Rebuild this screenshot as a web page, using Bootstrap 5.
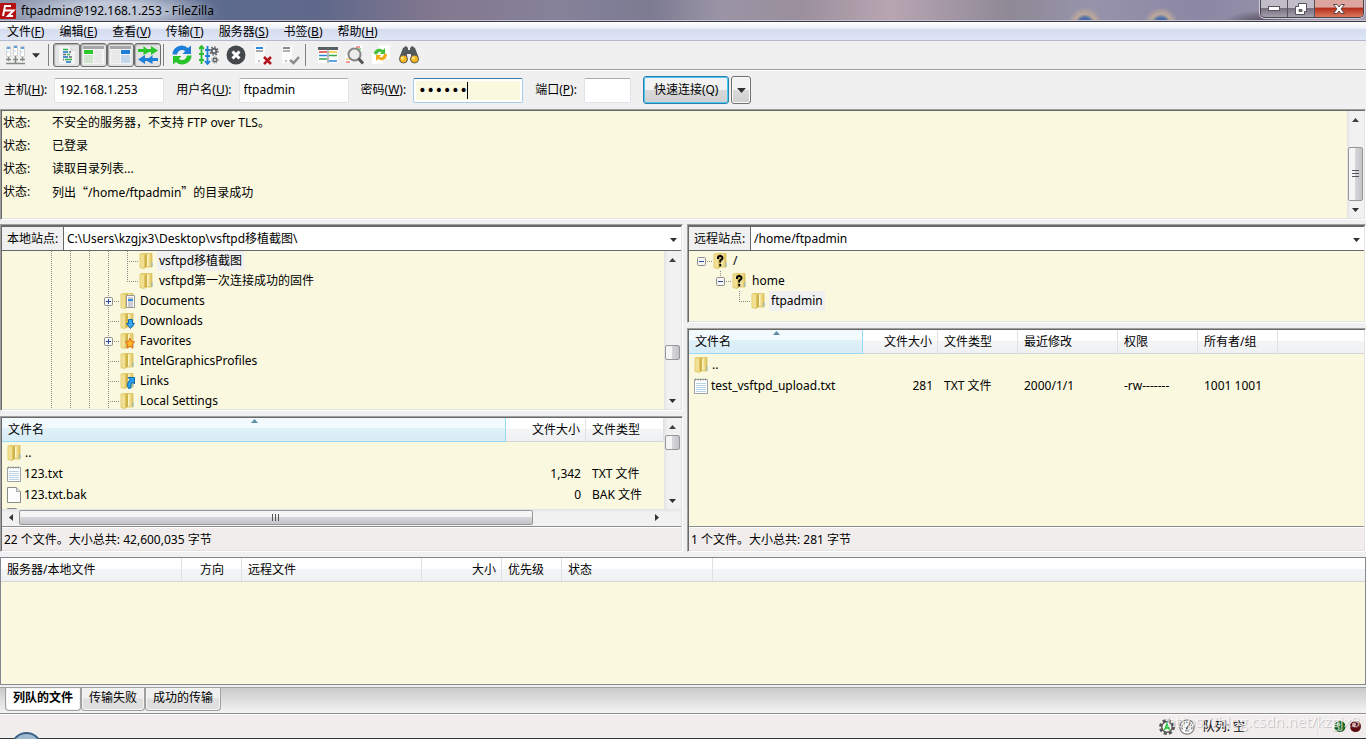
<!DOCTYPE html>
<html lang="zh-CN">
<head>
<meta charset="utf-8">
<meta name="viewport" content="width=device-width, initial-scale=1">
<title>ftpadmin@192.168.1.253 - FileZilla</title>
<link href="https://cdn.jsdelivr.net/npm/bootstrap@5.3.0/dist/css/bootstrap.min.css" rel="stylesheet">
<style>
  :root { --face:#f0f0f0; --cream:#faf8de; --dark:#696969; }
  body { height:100vh; min-height:600px; margin:0; background:var(--face); color:#000; font-family:"Noto Sans","Noto Sans CJK SC",sans-serif; font-size:12px; line-height:18px; }
  button, input, select { font:inherit; color:#000; }
  svg { display:block; flex:none; }
  .cjk { font-family:"Noto Sans CJK SC",sans-serif; }

  .titlebar { height:22px; border-bottom:1px solid #3b3a48; box-shadow:inset 0 -1px #c9c3d0;
    background:
      radial-gradient(ellipse 110px 22px at 110px 11px, rgba(205,212,226,.85) 40%, transparent 100%),
      radial-gradient(circle at 1085px 24px, #4a6ca8 6px, #bda99a 10px, transparent 17px),
      radial-gradient(circle at 1161px 24px, #4a6ca8 6px, #bda99a 10px, transparent 17px),
      radial-gradient(ellipse 40px 14px at 1262px 24px, #4b4350, transparent),
      linear-gradient(90deg,#8c94ab 0,#5c6a8e 230px,#5f688a 320px,#83788f 440px,#85829a 560px,#7c7b92 650px,#9a94a6 720px,#9a8f9b 800px,#b8a5b2 890px,#8e8995 1010px,#9793ab 1090px,#8b87a4 1200px,#a49db0 100%); }
  .titletext { padding-left:5px; }
  .winbtns { height:18px; border:1px solid #474553; border-top:0; border-radius:0 0 5px 5px; box-shadow:0 0 0 1px #cfcad6; margin-right:2px; overflow:hidden; align-self:flex-start; }
  .winbtns button { border:0; padding:0; width:27px; height:17px; border-right:1px solid #55525f; background:linear-gradient(#c0bdc8 0 45%,#75717e 50%,#a39fac); display:flex; align-items:center; justify-content:center; }
  .winbtns .closer { width:48px; border-right:0; background:linear-gradient(#dca59e 0 40%,#b5301d 50%,#da7a5c); }

  .menubar { height:19px; background:linear-gradient(#fff,#eef1f9 35%,#d5dcef 40%,#dfe6f7); border-bottom:1px solid #b4bacb; }
  .menubar button { border:0; background:none; padding:0 8px 0 7px; line-height:20px; }
  .toolbar { height:30px; border-bottom:1px solid #fff; box-shadow:inset 0 -1px #a0a0a0; padding-left:6px; padding-bottom:1px; }
  .toolbar button { border:0; background:none; padding:0; width:27px; height:24px; display:flex; align-items:center; justify-content:center; }
  .toolbar .sites { width:20px; }
  .toolbar .pressed { border:1px solid #6d6d6d; border-radius:3px; background:#e4e4e4; box-shadow:inset 1px 1px 1px #aaa; }
  .sep { width:1px; height:22px; background:#808080; margin:0 4px 0 2px; }
  .quick { height:38px; padding-left:4px; gap:12px; }
  .quick .item { gap:7px; }
  .quick input { width:110px; height:25px; border:1px solid #e2e3ea; border-top-color:#abadb3; padding:0 4px 2px; border-radius:2px; background:#fff; line-height:20px; outline:0; }
  .quick .port { width:47px; }
  .quick .pass { border-color:#a9cbe8; border-top-color:#3d7bad; padding:0 4px; background:var(--cream); box-shadow:inset 0 0 0 2px #fff; font-family:"DejaVu Sans",sans-serif; font-size:14px; }
  .caret { left:54px; top:4px; width:1px; height:17px; background:#000; }
  .connect { height:28px; padding:0 10px; border:1px solid #2e7fae; border-radius:3px; background:linear-gradient(#f2f2f2 0 48%,#dadada 50%,#cfcfcf); box-shadow:inset 0 0 0 1px #48c9f2; margin-right:2px; }
  .drop { width:20px; height:28px; border:1px solid #707070; border-radius:3px; background:linear-gradient(#f2f2f2 0 48%,#dadada 50%,#cfcfcf); box-shadow:inset 0 0 0 1px #fbfbfb; padding:0; }

  .pane { border:1px solid; border-color:#a0a0a0 #fff #fff #a0a0a0; padding:1px; box-shadow:inset 1px 1px var(--dark), inset -1px -1px #e3e3e3; min-height:0; }
  .cream { background-color:var(--cream); }
  .logpane { flex:0 0 111px; }
  .logrow { height:23px; line-height:23px; padding-left:1px; }
  .logrow span:first-child { flex:0 0 49px; }
  .scroller { background:linear-gradient(90deg,#e3e3e3,#f0f0f0 20%,#f2f2f2); flex:0 0 17px; }
  .scroller .arrow, .hscroller .arrow { flex:0 0 17px; display:flex; align-items:center; justify-content:center; }
  .thumb { margin:0 1px; border:1px solid #979797; border-radius:2px; background:linear-gradient(90deg,#f5f5f5 0 45%,#d6d6da 50%,#c4c4c8); display:flex; align-items:center; justify-content:center; }
  .hscroller { height:17px; background:linear-gradient(#e3e3e3,#f0f0f0 20%,#f2f2f2); }
  .hthumb { width:514px; height:15px; margin-top:1px; border:1px solid #979797; border-radius:2px; background:linear-gradient(#f5f5f5 0 45%,#d6d6da 50%,#c4c4c8); display:flex; align-items:center; justify-content:center; }

  .panes { gap:4px; margin:4px 0 5px; }
  .side { gap:5px; }
  .localside { flex:0 0 50%; }
  .remoteside { flex:1 1 0; min-width:0; }
  .localtree { flex:0 0 187px; }
  .remotetree { flex:0 0 99px; }
  .sitebar { height:25px; border-bottom:1px solid var(--dark); border-top:1px solid var(--dark); background:#fff; }
  .sitebar label { width:62px; padding-left:5px; line-height:23px; background:var(--face); border-right:1px solid var(--dark); flex:none; white-space:nowrap; }
  .sitebar select { appearance:none; border:0; background:#fff; padding:0 20px 0 3px; width:100%; height:23px; outline:0; }
  .sitebar .caretdown { right:4px; top:11px; pointer-events:none; }
  .treerow { height:20px; line-height:20px; white-space:nowrap; }
  .treerow > svg { margin-top:2px; }
  .guide { width:19px; flex:none; background:repeating-linear-gradient(#8c8c86 0 1px,transparent 1px 2px) 0 0/1px 100% no-repeat; }
  .node { width:12px; flex:none; position:relative; background:repeating-linear-gradient(#8c8c86 0 1px,transparent 1px 2px) 0 0/1px 100% no-repeat, repeating-linear-gradient(90deg,#8c8c86 0 1px,transparent 1px 2px) 0 10px/11px 1px no-repeat; }
  .node.last { background-size:1px 11px, 11px 1px; }
  .node.root { background-size:0 0, 11px 1px; }
  .localrows .treerow { padding-left:49px; }
  .box { position:absolute; left:-4px; top:6px; width:9px; height:9px; }
  .treetext { margin-left:3px; padding:0 2px; }
  .picked { background:#f0f0f0; }

  .listing { table-layout:fixed; width:100%; border-collapse:separate; border-spacing:0; }
  .listing th { height:24px; font-weight:400; padding:0 5px 0 6px; line-height:20px; border-right:1px solid #dfe0e4; border-bottom:1px solid #d5d5d5; background:linear-gradient(#fff 0 45%,#f3f4f6 50%,#f0f1f3); white-space:nowrap; overflow:hidden; }
  .listing th.sorted { background:linear-gradient(#f2fafd 0 42%,#dff1f9 46%,#d7ecf6); border-color:#96d9f9; position:relative; }
  .sorted svg { position:absolute; left:50%; top:1px; margin-left:-3px; }
  .listing td { height:21px; padding:0 5px 0 6px; line-height:20px; white-space:nowrap; }
  .listing td:first-child { padding-left:5px; }
  .filecell { gap:3px; }
  .infobar { height:24px; line-height:25px; background:#f1edec; border-top:1px solid #8c8c8c; padding-left:2px; box-shadow:inset 0 1px #fff; }
  .queue { flex:0 0 128px; border:1px solid #828790; }

  .tabstrip { height:27px; margin-top:2px; border-top:1px solid #a0a0a0; border-bottom:1px solid #8e8e8e; background:linear-gradient(#cacaca,#f4f4f4); padding-left:5px; }
  .tabstrip button { height:23px; border:1px solid #a0a0a0; border-top:0; border-radius:0 0 4px 4px; background:linear-gradient(#f0f0f0 0 45%,#dedede 50%,#e0e0e0); padding:0 7px 2px; line-height:20px; box-shadow:inset 0 0 0 1px #f4f4f4; }
  .tabstrip button.on { font-weight:700; background:#fff; }
  .statusbar { height:25px; background:#f1edec; border-top:1px solid #fff; border-bottom:1px solid #35343f; padding-right:4px; }
  .orb { left:12px; bottom:-20px; width:29px; height:26px; border-radius:50%; background:#9fb9d0; border:2px solid #3b6286; }
  .watermark { right:6px; top:-4px; font:15px/20px "Open Sans",sans-serif; color:rgba(255,255,255,.65); text-shadow:1px 1px 0 rgba(140,140,140,.4); pointer-events:none; }
</style>
<script src="https://cdn.jsdelivr.net/npm/bootstrap@5.3.0/dist/js/bootstrap.bundle.min.js"></script>
</head>
<body class="d-flex flex-column overflow-hidden">

<svg width="0" height="0" class="position-absolute" aria-hidden="true">
  <defs>
    <linearGradient id="gold" x1="0" x2="1"><stop offset="0" stop-color="#f3e08a"/><stop offset=".45" stop-color="#e6cc66"/><stop offset=".55" stop-color="#c9ad4a"/><stop offset=".65" stop-color="#f8ecb0"/><stop offset="1" stop-color="#dcc054"/></linearGradient>
    <symbol id="folder" viewBox="0 0 15 16"><path d="M1 1l4-.5h8V14H7l-2 1.500-4-1z" fill="url(#gold)" stroke="#d9bd55" stroke-width=".7"/><path d="M1.500 1.500L5.500 2.500v12.500l-4-1z" fill="#f1e094"/><path d="M5.500 2.500L8 1v12.500L5.500 15z" fill="#d0b24a"/><path d="M8.500 1.500V13" stroke="#fdf5c8"/><path d="M13 9.500v4" stroke="#78b7e4"/></symbol>
    <symbol id="txt" viewBox="0 0 14 16"><path d="M.5 1.500h13v14H.5z" fill="#fff" stroke="#9aa1a8"/><path d="M1 1.500h12" stroke="#8f8f8f" stroke-dasharray="1 1.500" stroke-width="2"/><path d="M2 5.500h10M2 7.500h10M2 9.500h10M2 11.500h10M2 13.500h10" stroke="#b9d2e6"/></symbol>
    <symbol id="blank" viewBox="0 0 14 16"><path d="M.5.5h9l4 4v11H.5z" fill="#fdfdfd" stroke="#8a8a8a"/><path d="M9.500.5v4h4" fill="#e5e5e5" stroke="#a5a5a5"/></symbol>
    <symbol id="plus" viewBox="0 0 9 9"><rect x=".5" y=".5" width="8" height="8" rx="1" fill="#f5f5f5" stroke="#8e8e8e"/><path d="M2 4.500h5M4.500 2v5" stroke="#2b4a9a"/></symbol>
    <symbol id="minus" viewBox="0 0 9 9"><rect x=".5" y=".5" width="8" height="8" rx="1" fill="#f5f5f5" stroke="#8e8e8e"/><path d="M2 4.500h5" stroke="#2b4a9a"/></symbol>
    <symbol id="tup" viewBox="0 0 7 4"><path d="M0 4L3.500 0 7 4z" fill="#404040"/></symbol>
    <symbol id="tdown" viewBox="0 0 7 4"><path d="M0 0h7L3.500 4z" fill="#303030"/></symbol>
    <symbol id="sortmark" viewBox="0 0 7 4"><path d="M0 4L3.500 0 7 4z" fill="#5d8fa9"/></symbol>
    <symbol id="query" viewBox="0 0 15 16"><use href="#folder"/><path d="M5 6V4.500Q5 3 7.200 3T9.500 5Q9.500 6.200 7.300 7.700V9.500M7.300 11v2.200" fill="none" stroke="#000" stroke-width="2"/></symbol>
    <symbol id="cycle" viewBox="0 0 20 20"><path d="M.5 9.500C.5 4 5 .5 10 .5q3.500 0 6 2.500L19 .5v8.500h-8.500l2.700-2.800Q12 5 10 5 6 5 5 9.500z" fill="#1e7fd8"/><path d="M19.500 10.500c0 5.500-4.500 9-9.500 9q-3.500 0-6-2.500L1 19.500V11h8.500l-2.700 2.800Q8 15 10 15q4 0 5-4.500z" fill="#27c52a"/></symbol>
  </defs>
</svg>

<header class="titlebar d-flex align-items-center flex-shrink-0">
  <svg width="16" height="16" viewBox="0 0 16 16"><rect width="16" height="16" rx="1" fill="#b50f0f"/><path d="M3 13L5 3h6M4 7.500h5M8.500 7.500h5L8 13h5" fill="none" stroke="#fff" stroke-width="2"/></svg>
  <span class="titletext">ftpadmin@192.168.1.253 - FileZilla</span>
  <div class="winbtns d-flex ms-auto">
    <button aria-label="最小化"><svg width="12" height="5" viewBox="0 0 12 5"><rect x=".5" y=".5" width="11" height="4" fill="#fff" stroke="#57535f"/></svg></button>
    <button aria-label="还原"><svg width="12" height="12" viewBox="0 0 12 12"><path d="M3.500.5h8v8h-2v3h-9v-8h3z" fill="#fff" stroke="#57535f"/><path d="M4 6.500h3v2H4z" fill="#888" stroke="#57535f"/></svg></button>
    <button class="closer" aria-label="关闭"><svg width="12" height="10" viewBox="0 0 12 10"><path d="M.5.500h3.500l2 2.500 2-2.500h3.500L8 5l3.500 4.500H8L6 7 4 9.500H.5L4 5z" fill="#fff" stroke="#5c454a"/></svg></button>
  </div>
</header>

<nav class="menubar d-flex flex-shrink-0">
  <button>文件(<u>F</u>)</button><button>编辑(<u>E</u>)</button><button>查看(<u>V</u>)</button><button>传输(<u>T</u>)</button><button>服务器(<u>S</u>)</button><button>书签(<u>B</u>)</button><button>帮助(<u>H</u>)</button>
</nav>

<div class="toolbar d-flex align-items-center flex-shrink-0" role="toolbar">
  <button class="sites" aria-label="站点管理器"><svg width="20" height="20" viewBox="0 0 20 20"><g fill="#fff" stroke="#d4d4d4"><path d="M.5 1.500h4v10h-4zM7.500.5h4v10h-4zM14.500 1.500h4v10h-4z"/></g><path d="M1 3h3M8 2h3M15 3h3" stroke="#5c9fe0" stroke-width="2"/><path d="M1 7h2M8 6h2M15 7h2" stroke="#b9d4ef"/><path d="M2.500 12v4M9.500 11v7M16.500 12v4M0 14.500h5M7 14.500h5M14 14.500h5M0 18.500h19" stroke="#858b85" stroke-width="1.600"/></svg></button>
  <button class="sites" aria-label="站点列表"><svg width="8" height="5"><use href="#tdown"/></svg></button>
  <div class="sep"></div>
  <button class="pressed" aria-label="消息日志"><svg width="18" height="18" viewBox="0 0 18 18"><path d="M1 0h11l5 5v13H1z" fill="#f4f4f4"/><path d="M12 0v5h5z" fill="#ddd"/><path d="M5 3.500h5M9 8.500h3M7 13.500h7" stroke="#30b44a" stroke-width="1.500"/><path d="M5 6h5M5 11h5M8 16h5" stroke="#4d91d5" stroke-width="1.800"/><path d="M11 6h2M11 11h3M5 13.500h1M5 8.500h3" stroke="#667" stroke-width="1.500"/></svg></button>
  <button class="pressed" aria-label="本地目录树"><svg width="21" height="18" viewBox="0 0 21 18"><path d="M0 0h21v18H0z" fill="#f4f4f4"/><path d="M0 1.500h21" stroke="#a6a6a6" stroke-width="3"/><path d="M1 4h9v4H1z" fill="#28c928"/><path d="M1 9h9v8H1z" fill="#cfe3cf"/><path d="M11 4h8v13h-8z" fill="#e9e9e9"/></svg></button>
  <button class="pressed" aria-label="远程目录树"><svg width="21" height="18" viewBox="0 0 21 18"><path d="M0 0h21v18H0z" fill="#f4f4f4"/><path d="M0 1.500h21" stroke="#a6a6a6" stroke-width="3"/><path d="M11 4h9v4h-9z" fill="#1e7fd8"/><path d="M11 9h9v8h-9z" fill="#c4d7ea"/><path d="M1 4h9v13H1z" fill="#e9e9e9"/></svg></button>
  <button class="pressed" aria-label="传输队列"><svg width="20" height="18" viewBox="0 0 20 18"><path d="M0 3h5.500V0L9 3h4V0l7 4.500L13 9V6h-2L5.500 9V6H0z" fill="#28c52b"/><path d="M20 12h-5.500V9L11 12H7V9l-7 4.500L7 18v-3h2l5.500 3v-3H20z" fill="#1e7fd8"/></svg></button>
  <div class="sep"></div>
  <button aria-label="刷新"><svg width="20" height="20"><use href="#cycle"/></svg></button>
  <button aria-label="处理队列"><svg width="20" height="20" viewBox="0 0 20 20"><path d="M2.500 1v18M0 4l2.500-3L5 4M0 9h5M0 15h5" fill="none" stroke="#28bd2d" stroke-width="1.800"/><path d="M8.500 1v18M6 16l2.500 3 2.500-3M6 5h5M6 11h5" fill="none" stroke="#1e7fd8" stroke-width="1.800"/><g fill="none" stroke="#60646a"><circle cx="15" cy="6" r="2.300" stroke-width="2"/><circle cx="15" cy="6" r="4" stroke-width="1.500" stroke-dasharray="1.600 1.500"/><circle cx="16" cy="15" r="1.700" stroke-width="1.500"/><circle cx="16" cy="15" r="3" stroke-dasharray="1.200 1.200"/></g></svg></button>
  <button aria-label="取消"><svg width="20" height="20" viewBox="0 0 20 20"><circle cx="10" cy="10" r="9.500" fill="#45484a"/><path d="M6.500 6.500l7 7M13.500 6.500l-7 7" stroke="#fff" stroke-width="3"/></svg></button>
  <button aria-label="断开"><svg width="19" height="20" viewBox="0 0 19 20"><path d="M2 1h10v17H2z" fill="#fbfbfb"/><path d="M3 3h7" stroke="#3187da" stroke-width="2"/><path d="M3 6h7" stroke="#555"/><path d="M5 16h2" stroke="#888"/><path d="M11 12l7 7M18 12l-7 7" stroke="#b3151b" stroke-width="2.500"/></svg></button>
  <button aria-label="重新连接"><svg width="20" height="20" viewBox="0 0 20 20"><path d="M2 1h10v17H2z" fill="#fbfbfb"/><path d="M3 3h7" stroke="#888" stroke-width="2"/><path d="M3 6h7" stroke="#666"/><path d="M5 16h2" stroke="#888"/><path d="M10 15l3.500 3L19 12" fill="none" stroke="#8b8b8b" stroke-width="2.500"/></svg></button>
  <div class="sep"></div>
  <button class="ms-1" aria-label="过滤器"><svg width="20" height="16" viewBox="0 0 20 16"><path d="M0 0h20v16H0z" fill="#fff"/><path d="M0 1.500h20" stroke="#596064" stroke-width="3"/><path d="M1 5h8" stroke="#d8382e" stroke-width="1.500"/><path d="M11 5h8" stroke="#e8c52f" stroke-width="1.500"/><path d="M1 8.500h8M11 14h8" stroke="#2a84d8" stroke-width="1.500"/><path d="M11 8.500h8M1 12h8" stroke="#35a843" stroke-width="1.500"/><path d="M10 1v15" stroke="#777"/></svg></button>
  <button aria-label="目录比较"><svg width="20" height="20" viewBox="0 0 20 20"><path d="M9 0h8v7H9zM0 10h7v8H0z" fill="#fff"/><path d="M11 2h4" stroke="#d33"/><path d="M11 4h5" stroke="#3a3"/><path d="M1 14h4" stroke="#e5b525"/><path d="M1 17h4" stroke="#d33"/><circle cx="9.500" cy="9.500" r="6" fill="#ececec" stroke="#858585" stroke-width="2"/><path d="M13.500 13.500l4.500 5" stroke="#555" stroke-width="3"/></svg></button>
  <button aria-label="同步浏览"><svg width="19" height="20" viewBox="0 0 19 20"><path d="M7 0h11v14H7zM0 8h11v11H0z" fill="#fff"/><path d="M2 9c0-4 4-6 7-5l2 1 2-2v6H8l1.500-2Q6 6 5 9.500z" fill="#45c13b"/><path d="M15 9c0 5-4 7-7 6l-2-1-2 2v-6h5l-1.500 2Q11 13 12 9z" fill="#f0ac16"/></svg></button>
  <button aria-label="搜索"><svg width="20" height="18" viewBox="0 0 20 18"><path d="M4 2l3-2 2 2v2h2V2l2-2 3 2 3.500 9H12V8H8v3H.5z" fill="#55585b"/><circle cx="4.500" cy="13" r="4" fill="#f6b619" stroke="#55585b"/><circle cx="15.500" cy="13" r="4" fill="#f6b619" stroke="#55585b"/><circle cx="3.500" cy="12" r="1.500" fill="#ffe38b"/><circle cx="14.500" cy="12" r="1.500" fill="#ffe38b"/></svg></button>
</div>

<form class="quick d-flex align-items-center flex-shrink-0" onsubmit="return false">
  <div class="item d-flex align-items-center"><label for="host">主机(<u>H</u>):</label><input id="host" type="text" value="192.168.1.253"></div>
  <div class="item d-flex align-items-center"><label for="user">用户名(<u>U</u>):</label><input id="user" type="text" value="ftpadmin"></div>
  <div class="item d-flex align-items-center"><label for="pass">密码(<u>W</u>):</label><div class="position-relative d-flex"><input id="pass" class="pass" type="password" value="secret"><span class="caret position-absolute"></span></div></div>
  <div class="item d-flex align-items-center"><label for="port">端口(<u>P</u>):</label><input id="port" class="port" type="text"></div>
  <div class="d-flex"><button class="connect" type="submit">快速连接(Q)</button><button class="drop d-flex align-items-center justify-content-center" type="button" aria-label="历史"><svg width="9" height="5"><use href="#tdown"/></svg></button></div>
</form>

<section class="pane cream logpane d-flex">
  <div class="flex-grow-1 overflow-hidden">
    <div class="logrow d-flex"><span>状态:</span><span>不安全的服务器，不支持 FTP over TLS。</span></div>
    <div class="logrow d-flex"><span>状态:</span><span>已登录</span></div>
    <div class="logrow d-flex"><span>状态:</span><span>读取目录列表...</span></div>
    <div class="logrow d-flex"><span>状态:</span><span>列出<span class="cjk">“</span>/home/ftpadmin<span class="cjk">”</span>的目录成功</span></div>
  </div>
  <div class="scroller d-flex flex-column"><div class="arrow"><svg width="7" height="4"><use href="#tup"/></svg></div><div class="flex-grow-1"></div><div class="thumb" style="height:54px"><svg width="7" height="8" viewBox="0 0 7 8"><path d="M0 .5h7M0 3.500h7M0 6.500h7" stroke="#555"/></svg></div><div class="arrow"><svg width="7" height="4"><use href="#tdown"/></svg></div></div>
</section>

<main class="panes d-flex flex-grow-1 overflow-hidden">
  <div class="side localside d-flex flex-column">
    <section class="pane cream localtree d-flex flex-column">
      <div class="sitebar d-flex flex-shrink-0"><label for="local">本地站点:</label><div class="position-relative flex-grow-1"><select id="local"><option>C:\Users\kzgjx3\Desktop\vsftpd移植截图\</option></select><svg class="caretdown position-absolute" width="7" height="4"><use href="#tdown"/></svg></div></div>
      <div class="d-flex flex-grow-1 overflow-hidden">
        <div class="localrows flex-grow-1 overflow-hidden">
          <div class="treerow d-flex"><i class="guide"></i><i class="guide"></i><i class="guide"></i><i class="guide"></i><i class="node"></i><svg width="15" height="16"><use href="#folder"/></svg><span class="treetext picked">vsftpd移植截图</span></div>
          <div class="treerow d-flex"><i class="guide"></i><i class="guide"></i><i class="guide"></i><i class="guide"></i><i class="node last"></i><svg width="15" height="16"><use href="#folder"/></svg><span class="treetext">vsftpd第一次连接成功的固件</span></div>
          <div class="treerow d-flex"><i class="guide"></i><i class="guide"></i><i class="guide"></i><i class="node"><svg class="box"><use href="#plus"/></svg></i><svg width="15" height="16" viewBox="0 0 15 16"><use href="#folder"/><path d="M6.500 2.500h8v12h-8z" fill="#fff" stroke="#999"/><path d="M8 5h5M8 9h5M8 11h5M8 13h5" stroke="#99a"/><path d="M8 7h5" stroke="#3d8fdb" stroke-width="2"/></svg><span class="treetext">Documents</span></div>
          <div class="treerow d-flex"><i class="guide"></i><i class="guide"></i><i class="guide"></i><i class="node"></i><svg width="15" height="16" viewBox="0 0 15 16"><use href="#folder"/><path d="M8.500 6.500h4v4h2L10.500 15.500l-4-5h2z" fill="#35a8ee" stroke="#1268ac"/></svg><span class="treetext">Downloads</span></div>
          <div class="treerow d-flex"><i class="guide"></i><i class="guide"></i><i class="guide"></i><i class="node"><svg class="box"><use href="#plus"/></svg></i><svg width="15" height="16" viewBox="0 0 15 16"><use href="#folder"/><path d="M10 5l1.400 3.500 3.300.4-2.500 2.300.8 4-3-2-3 2 .8-4L5.300 8.900l3.300-.4z" fill="#ffb82a" stroke="#e06a14"/></svg><span class="treetext">Favorites</span></div>
          <div class="treerow d-flex"><i class="guide"></i><i class="guide"></i><i class="guide"></i><i class="node"></i><svg width="15" height="16"><use href="#folder"/></svg><span class="treetext">IntelGraphicsProfiles</span></div>
          <div class="treerow d-flex"><i class="guide"></i><i class="guide"></i><i class="guide"></i><i class="node"></i><svg width="15" height="16" viewBox="0 0 15 16"><use href="#folder"/><path d="M8 4.500h6.500V11L12.500 9q-2 2-1.500 6l-2.500.5Q6 11 10 6.500z" fill="#25a0ee" stroke="#1268ac"/></svg><span class="treetext">Links</span></div>
          <div class="treerow d-flex"><i class="guide"></i><i class="guide"></i><i class="guide"></i><i class="node"></i><svg width="15" height="16"><use href="#folder"/></svg><span class="treetext">Local Settings</span></div>
        </div>
        <div class="scroller d-flex flex-column"><div class="arrow"><svg width="7" height="4"><use href="#tup"/></svg></div><div style="flex:78 0 0"></div><div class="thumb" style="height:15px"></div><div style="flex:32 0 0"></div><div class="arrow"><svg width="7" height="4"><use href="#tdown"/></svg></div></div>
      </div>
    </section>

    <section class="pane cream d-flex flex-column flex-grow-1">
      <div class="d-flex flex-grow-1 overflow-hidden">
        <div class="flex-grow-1 overflow-hidden">
          <table class="listing">
            <colgroup><col><col style="width:80px"><col style="width:78px"></colgroup>
            <thead><tr><th class="sorted">文件名<svg width="7" height="4"><use href="#sortmark"/></svg></th><th class="text-end">文件大小</th><th>文件类型</th></tr></thead>
            <tbody>
              <tr><td><div class="filecell d-flex align-items-center"><svg width="15" height="16"><use href="#folder"/></svg>..</div></td><td></td><td></td></tr>
              <tr><td><div class="filecell d-flex align-items-center"><svg width="14" height="16"><use href="#txt"/></svg>123.txt</div></td><td class="text-end">1,342</td><td>TXT 文件</td></tr>
              <tr><td><div class="filecell d-flex align-items-center"><svg width="14" height="16"><use href="#blank"/></svg>123.txt.bak</div></td><td class="text-end">0</td><td>BAK 文件</td></tr>
              <tr><td><div class="filecell d-flex align-items-center"><svg width="14" height="16"><use href="#blank"/></svg></div></td><td></td><td></td></tr>
            </tbody>
          </table>
        </div>
        <div class="scroller d-flex flex-column"><div class="arrow"><svg width="7" height="4"><use href="#tup"/></svg></div><div class="thumb" style="height:15px"></div><div class="flex-grow-1"></div><div class="arrow"><svg width="7" height="4"><use href="#tdown"/></svg></div></div>
      </div>
      <div class="hscroller d-flex flex-shrink-0"><div class="arrow"><svg width="4" height="7" viewBox="0 0 4 7"><path d="M4 0v7L0 3.500z" fill="#333"/></svg></div><div class="hthumb"><svg width="8" height="7" viewBox="0 0 8 7"><path d="M.5 0v7M3.500 0v7M6.500 0v7" stroke="#555"/></svg></div><div class="flex-grow-1"></div><div class="arrow me-3"><svg width="4" height="7" viewBox="0 0 4 7"><path d="M0 0v7l4-3.500z" fill="#333"/></svg></div></div>
      <div class="infobar flex-shrink-0">22 个文件。大小总共: 42,600,035 字节</div>
    </section>
  </div>

  <div class="side remoteside d-flex flex-column">
    <section class="pane cream remotetree d-flex flex-column">
      <div class="sitebar d-flex flex-shrink-0"><label for="remote">远程站点:</label><div class="position-relative flex-grow-1"><select id="remote"><option>/home/ftpadmin</option></select><svg class="caretdown position-absolute" width="7" height="4"><use href="#tdown"/></svg></div></div>
      <div class="ps-2 overflow-hidden">
        <div class="treerow d-flex ps-1"><i class="node root"><svg class="box"><use href="#minus"/></svg></i><svg width="15" height="16"><use href="#query"/></svg><span class="treetext">/</span></div>
        <div class="treerow d-flex ps-1"><i style="width:19px"></i><i class="node last"><svg class="box"><use href="#minus"/></svg></i><svg width="15" height="16"><use href="#query"/></svg><span class="treetext">home</span></div>
        <div class="treerow d-flex ps-1"><i style="width:38px"></i><i class="node last"></i><svg width="15" height="16"><use href="#folder"/></svg><span class="treetext picked">ftpadmin</span></div>
      </div>
    </section>

    <section class="pane cream d-flex flex-column flex-grow-1">
      <div class="flex-grow-1 overflow-hidden">
        <table class="listing">
          <colgroup><col style="width:174px"><col style="width:75px"><col style="width:80px"><col style="width:100px"><col style="width:80px"><col style="width:80px"><col></colgroup>
          <thead><tr><th class="sorted">文件名<svg width="7" height="4"><use href="#sortmark"/></svg></th><th class="text-end">文件大小</th><th>文件类型</th><th>最近修改</th><th>权限</th><th>所有者/组</th><th class="border-end-0"></th></tr></thead>
          <tbody>
            <tr><td><div class="filecell d-flex align-items-center"><svg width="15" height="16"><use href="#folder"/></svg>..</div></td><td></td><td></td><td></td><td></td><td></td><td></td></tr>
            <tr><td><div class="filecell d-flex align-items-center"><svg width="14" height="16"><use href="#txt"/></svg>test_vsftpd_upload.txt</div></td><td class="text-end">281</td><td>TXT 文件</td><td>2000/1/1</td><td>-rw-------</td><td>1001 1001</td><td></td></tr>
          </tbody>
        </table>
      </div>
      <div class="infobar flex-shrink-0">1 个文件。大小总共: 281 字节</div>
    </section>
  </div>
</main>

<section class="queue cream">
  <table class="listing">
    <colgroup><col style="width:181px"><col style="width:60px"><col style="width:180px"><col style="width:80px"><col style="width:60px"><col style="width:151px"><col></colgroup>
    <thead><tr><th>服务器/本地文件</th><th class="text-center">方向</th><th>远程文件</th><th class="text-end">大小</th><th>优先级</th><th>状态</th><th class="border-end-0"></th></tr></thead>
  </table>
</section>

<div class="tabstrip d-flex align-items-start flex-shrink-0" role="tablist">
  <button class="on" role="tab" aria-selected="true">列队的文件</button><button role="tab">传输失败</button><button role="tab">成功的传输</button>
</div>

<footer class="statusbar d-flex align-items-center justify-content-end flex-shrink-0 position-relative">
  <span class="orb position-absolute"></span>
  <svg width="16" height="16" viewBox="0 0 16 16"><circle cx="8" cy="8" r="6.500" fill="none" stroke="#555" stroke-width="3" stroke-dasharray="3 2.100"/><circle cx="8" cy="8" r="5.200" fill="#fff" stroke="#555" stroke-width="1.500"/><path d="M5.500 11L8 5l2.500 6M6.500 9h3" fill="none" stroke="#24c02a" stroke-width="1.500"/></svg>
  <svg width="16" height="16" viewBox="0 0 16 16" class="ms-1"><circle cx="8" cy="8" r="7.200" fill="#fff" stroke="#777" stroke-width="1.200"/><path d="M3.500 10.500a5 5 0 1 1 9 0" fill="none" stroke="#888" stroke-width="1.500" stroke-dasharray="2 1"/><path d="M7.500 10l3-5" stroke="#333" stroke-width="1.500"/><path d="M6 11.500h4" stroke="#999" stroke-width="2"/></svg>
  <span class="ms-2 me-5">队列: 空</span>
  <span class="ms-4 me-2 border-start ps-2" style="height:20px"></span>
  <svg width="28" height="13" viewBox="0 0 28 13"><circle cx="6" cy="6.500" r="5.500" fill="#0c5e12"/><circle cx="4.500" cy="4.500" r="2" fill="#a8d8a8"/><circle cx="21.500" cy="6.500" r="5.500" fill="#5e0c10"/><circle cx="20" cy="4.500" r="2" fill="#d6a8a8"/></svg>
  <span class="watermark position-absolute">https://blog.csdn.net/kzgjx3</span>
</footer>
</body>
</html>
